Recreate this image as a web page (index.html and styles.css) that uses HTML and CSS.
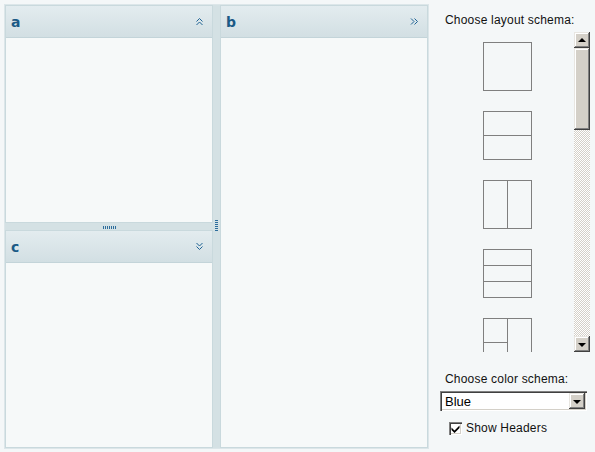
FILE: index.html
```html
<!DOCTYPE html>
<html>
<head>
<meta charset="utf-8">
<link rel="stylesheet" href="styles.css">
</head>
<body>
<div class="page">
  <div class="split">
    <div class="leftcol">
      <section class="pane">
        <header class="phead">
          <span class="ptitle">a</span>
          <svg class="icon" width="8" height="9" viewBox="0 0 8 9"><path d="M0.5 4.5 L3.5 1.5 L6.5 4.5 M0.5 8 L3.5 5 L6.5 8" fill="none" stroke="#1f6394" stroke-width="1"/></svg>
        </header>
        <div class="pbody"></div>
      </section>
      <div class="hsplit"><span class="hgrip"></span></div>
      <section class="pane">
        <header class="phead">
          <span class="ptitle">c</span>
          <svg class="icon" width="8" height="9" viewBox="0 0 8 9"><path d="M0.5 1 L3.5 4 L6.5 1 M0.5 4.5 L3.5 7.5 L6.5 4.5" fill="none" stroke="#1f6394" stroke-width="1"/></svg>
        </header>
        <div class="pbody"></div>
      </section>
    </div>
    <div class="vsplit"><span class="vgrip"></span></div>
    <section class="pane pane-b">
      <header class="phead">
        <span class="ptitle">b</span>
        <svg class="icon" width="9" height="8" viewBox="0 0 9 8"><path d="M1 0.5 L4 3.5 L1 6.5 M4.5 0.5 L7.5 3.5 L4.5 6.5" fill="none" stroke="#1f6394" stroke-width="1"/></svg>
      </header>
      <div class="pbody"></div>
    </section>
  </div>

  <aside class="side">
    <div class="label label-top">Choose layout schema:</div>
    <div class="listbox">
      <div class="thumbs">
        <svg class="thumb" width="49" height="49" viewBox="0 0 49 49"><rect x="0.5" y="0.5" width="48" height="48" fill="none" stroke="#7f7f7f"/></svg>
        <svg class="thumb" width="49" height="49" viewBox="0 0 49 49"><rect x="0.5" y="0.5" width="48" height="48" fill="none" stroke="#7f7f7f"/><line x1="0" y1="24.5" x2="49" y2="24.5" stroke="#7f7f7f"/></svg>
        <svg class="thumb" width="49" height="49" viewBox="0 0 49 49"><rect x="0.5" y="0.5" width="48" height="48" fill="none" stroke="#7f7f7f"/><line x1="24.5" y1="0" x2="24.5" y2="49" stroke="#7f7f7f"/></svg>
        <svg class="thumb" width="49" height="49" viewBox="0 0 49 49"><rect x="0.5" y="0.5" width="48" height="48" fill="none" stroke="#7f7f7f"/><line x1="0" y1="16.5" x2="49" y2="16.5" stroke="#7f7f7f"/><line x1="0" y1="32.5" x2="49" y2="32.5" stroke="#7f7f7f"/></svg>
        <svg class="thumb" width="49" height="49" viewBox="0 0 49 49"><rect x="0.5" y="0.5" width="48" height="48" fill="none" stroke="#7f7f7f"/><line x1="24.5" y1="0" x2="24.5" y2="49" stroke="#7f7f7f"/><line x1="0" y1="24.5" x2="24.5" y2="24.5" stroke="#7f7f7f"/></svg>
      </div>
      <div class="scrollbar">
        <div class="sbtn"><span class="tri-up"></span></div>
        <div class="sthumb"></div>
        <div class="strack"></div>
        <div class="sbtn"><span class="tri-down"></span></div>
      </div>
    </div>
    <div class="label label-color">Choose color schema:</div>
    <div class="select">
      <span class="select-text">Blue</span>
      <span class="sbtn select-btn"><span class="tri-down"></span></span>
    </div>
    <div class="check-row">
      <span class="checkbox">
        <svg width="9" height="9" viewBox="0 0 9 9"><path d="M0.5 3.5 L3.5 6.5 L8.5 1.5 L8.5 4 L3.5 9 L0.5 6 Z" fill="#000"/></svg>
      </span>
      <span class="check-label">Show Headers</span>
    </div>
  </aside>
</div>
</body>
</html>
```

FILE: styles.css
```css
html, body {
  margin: 0;
  padding: 0;
}
body {
  background: #f4f7f8;
  font-family: "Liberation Sans", Arial, sans-serif;
  width: 595px;
  height: 452px;
  overflow: hidden;
}
.page {
  display: flex;
  padding: 4px 0 0 4px;
}
.split {
  display: flex;
  width: 425px;
  height: 445px;
  box-sizing: border-box;
  border: 1px solid #dce6e9;
}
.leftcol {
  display: flex;
  flex-direction: column;
  width: 208px;
}
.pane {
  display: flex;
  flex-direction: column;
  height: 218px;
  box-sizing: border-box;
  border: 1px solid #c9d9dd;
  background: #f6f9f9;
}
.pane-b {
  width: 208px;
  height: 443px;
}
.phead {
  display: flex;
  align-items: center;
  justify-content: space-between;
  height: 32px;
  box-sizing: border-box;
  padding: 0 8px 0 5px;
  background: linear-gradient(#e3ecef, #d2dfe3);
  border-bottom: 1px solid #c3d4d9;
}
.ptitle {
  font-family: "DejaVu Sans", Verdana, sans-serif;
  font-weight: bold;
  font-size: 14px;
  color: #1b5a86;
  line-height: 1;
  margin-top: 1px;
}
.icon {
  display: block;
}
.pbody {
  flex: 1;
}
.hsplit {
  height: 7px;
  background: #d4e1e4;
  display: flex;
  justify-content: center;
  align-items: center;
}
.hgrip {
  width: 13px;
  height: 3px;
  margin-top: 1px;
  background: repeating-linear-gradient(to right, #2d6d9c 0 1px, transparent 1px 2px);
}
.vsplit {
  width: 7px;
  background: #d4e1e4;
  display: flex;
  flex-direction: column;
  align-items: center;
}
.vgrip {
  width: 3px;
  height: 12px;
  margin-top: 215px;
  background: repeating-linear-gradient(to bottom, #2d6d9c 0 1px, transparent 1px 2px);
}
.side {
  display: flex;
  flex-direction: column;
  width: 165px;
  padding-left: 10px;
  box-sizing: border-box;
  margin-left: 1px;
}
.label {
  font-size: 12px;
  color: #111;
  letter-spacing: 0.2px;
  padding-left: 5px;
  line-height: 14px;
}
.label-top {
  margin-top: 9px;
  height: 19px;
}
.listbox {
  display: flex;
  width: 150px;
  height: 320px;
}
.thumbs {
  width: 134px;
  overflow: hidden;
  display: flex;
  flex-direction: column;
  align-items: center;
  padding-top: 10px;
  box-sizing: border-box;
}
.thumb {
  flex: none;
  display: block;
  margin-bottom: 20px;
}
.scrollbar {
  width: 16px;
  display: flex;
  flex-direction: column;
}
.sbtn {
  width: 16px;
  height: 16px;
  box-sizing: border-box;
  background: #d4d0c8;
  box-shadow: inset -1px -1px #404040, inset 1px 1px #e8e6e1, inset -2px -2px #808080, inset 2px 2px #fff;
  display: flex;
  align-items: center;
  justify-content: center;
  flex: none;
}
.sthumb {
  height: 82px;
  background: #d4d0c8;
  box-shadow: inset -1px -1px #404040, inset 1px 1px #e8e6e1, inset -2px -2px #808080, inset 2px 2px #fff;
  flex: none;
}
.strack {
  flex: 1;
  background: repeating-conic-gradient(#d4d0c8 0 25%, #ffffff 0 50%) 0 0 / 2px 2px;
}
.tri-up, .tri-down {
  width: 0;
  height: 0;
  border-left: 4px solid transparent;
  border-right: 4px solid transparent;
}
.tri-up {
  border-bottom: 4px solid #000;
  margin-top: -1px;
}
.tri-down {
  border-top: 4px solid #000;
  margin-top: 1px;
}
.label-color {
  margin-top: 20px;
  height: 19px;
}
.select {
  display: flex;
  align-items: center;
  justify-content: space-between;
  width: 147px;
  height: 20px;
  box-sizing: border-box;
  background: #fff;
  box-shadow: inset 1px 1px #808080, inset 2px 2px #404040, inset -1px -1px #fff, inset -2px -2px #d4d0c8;
  padding: 2px 2px 2px 5px;
}
.select-text {
  font-size: 13px;
  color: #000;
}
.select-btn {
  width: 16px;
  height: 16px;
}
.check-row {
  display: flex;
  align-items: center;
  margin-top: 10px;
  padding-left: 9px;
}
.checkbox {
  width: 13px;
  height: 13px;
  box-sizing: border-box;
  background: #fff;
  box-shadow: inset 1px 1px #808080, inset 2px 2px #404040, inset -1px -1px #fff, inset -2px -2px #d4d0c8;
  display: flex;
  align-items: center;
  justify-content: center;
}
.checkbox svg {
  display: block;
}
.check-label {
  font-size: 12px;
  color: #111;
  margin-left: 4px;
  letter-spacing: 0.2px;
}
```
